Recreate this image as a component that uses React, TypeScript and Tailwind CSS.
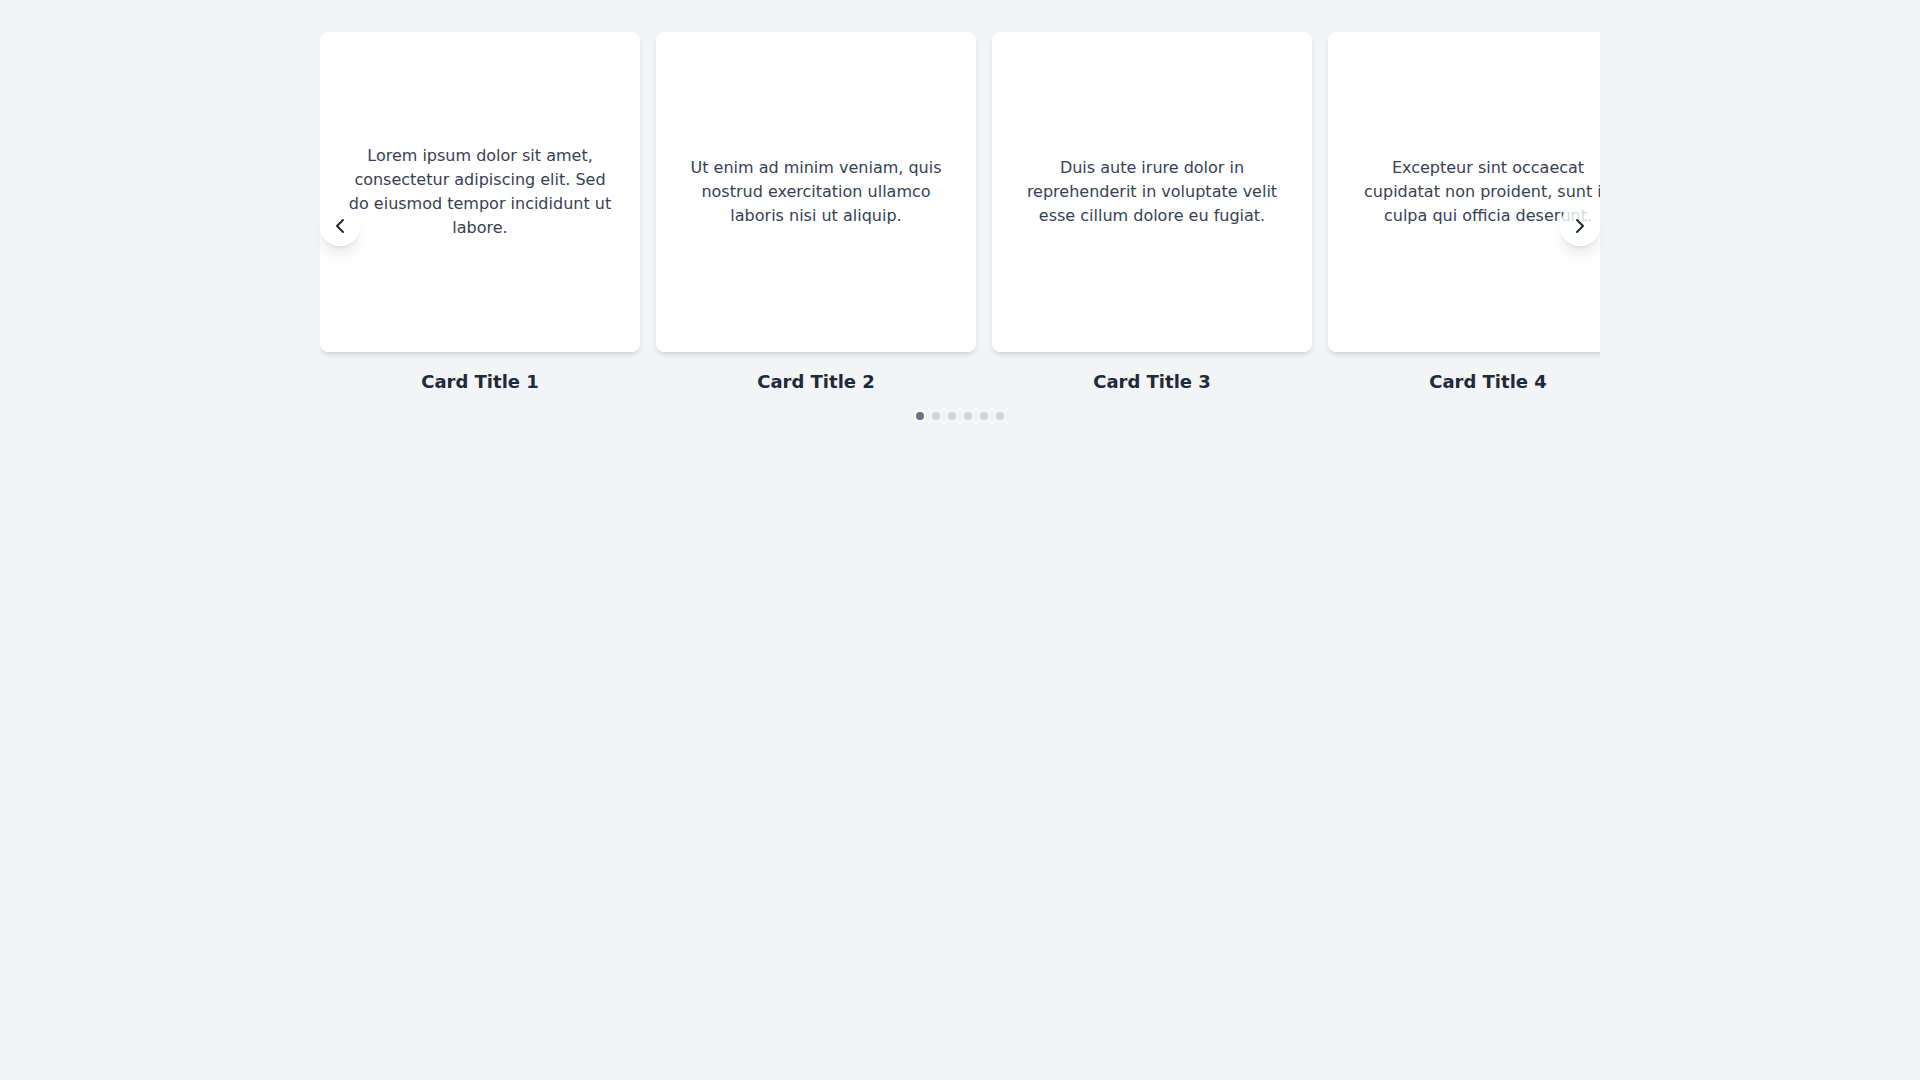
import { ChevronLeft, ChevronRight } from "lucide-react";

const cards = [
  {
    title: "Card Title 1",
    text: "Lorem ipsum dolor sit amet, consectetur adipiscing elit. Sed do eiusmod tempor incididunt ut labore.",
  },
  {
    title: "Card Title 2",
    text: "Ut enim ad minim veniam, quis nostrud exercitation ullamco laboris nisi ut aliquip.",
  },
  {
    title: "Card Title 3",
    text: "Duis aute irure dolor in reprehenderit in voluptate velit esse cillum dolore eu fugiat.",
  },
  {
    title: "Card Title 4",
    text: "Excepteur sint occaecat cupidatat non proident, sunt in culpa qui officia deserunt.",
  },
  {
    title: "Card Title 5",
    text: "Sed ut perspiciatis unde omnis iste natus error sit voluptatem accusantium.",
  },
  {
    title: "Card Title 6",
    text: "Nemo enim ipsam voluptatem quia voluptas sit aspernatur aut odit aut fugit.",
  },
];

export default function App() {
  const active = 0;

  return (
    <div className="min-h-screen bg-gray-100 font-['DejaVu_Sans',sans-serif]">
      <div className="relative mx-auto max-w-7xl pt-8">
        <div className="overflow-hidden">
          <div className="flex gap-4">
            {cards.map((c) => (
              <div key={c.title} className="w-80 shrink-0">
                <div className="flex h-80 items-center justify-center rounded-lg bg-white p-6 shadow-md">
                  <p className="text-center text-base leading-6 text-gray-700">{c.text}</p>
                </div>
                <h3 className="mt-4 text-center text-lg leading-7 font-bold text-gray-800">{c.title}</h3>
              </div>
            ))}
          </div>
        </div>

        {/* dots */}
        <div className="mt-4 flex justify-center gap-2">
          {cards.map((c, i) => (
            <span
              key={c.title}
              className={"h-2 w-2 rounded-full " + (i === active ? "bg-gray-500" : "bg-gray-300")}
            />
          ))}
        </div>

        {/* arrows */}
        <button
          type="button"
          aria-label="Previous"
          className="absolute top-[calc(50%+16px)] left-0 flex h-10 w-10 -translate-y-1/2 items-center justify-center rounded-full bg-white/80 shadow-lg"
        >
          <ChevronLeft className="h-6 w-6 text-gray-800" />
        </button>
        <button
          type="button"
          aria-label="Next"
          className="absolute top-[calc(50%+16px)] right-0 flex h-10 w-10 -translate-y-1/2 items-center justify-center rounded-full bg-white/80 shadow-lg"
        >
          <ChevronRight className="h-6 w-6 text-gray-800" />
        </button>
      </div>
    </div>
  );
}
